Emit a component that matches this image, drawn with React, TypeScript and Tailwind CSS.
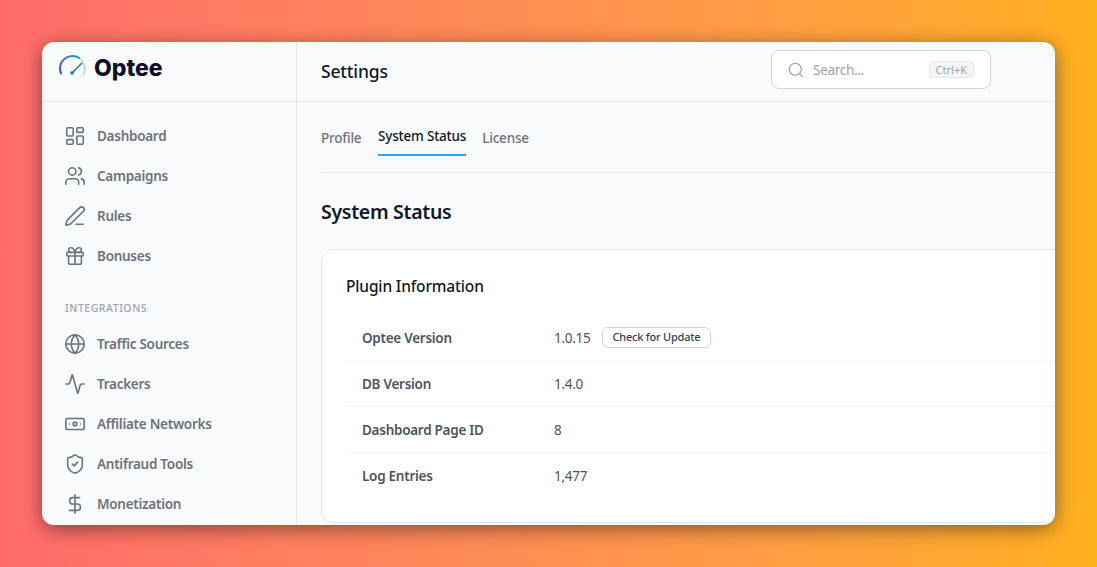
import { Activity, Banknote, DollarSign, Gift, Globe, LayoutDashboard, PenLine, Search, ShieldCheck, Users } from "lucide-react";

const mainNav = [
  { label: "Dashboard", icon: LayoutDashboard },
  { label: "Campaigns", icon: Users },
  { label: "Rules", icon: PenLine },
  { label: "Bonuses", icon: Gift },
];

const integrationNav = [
  { label: "Traffic Sources", icon: Globe },
  { label: "Trackers", icon: Activity },
  { label: "Affiliate Networks", icon: Banknote },
  { label: "Antifraud Tools", icon: ShieldCheck },
  { label: "Monetization", icon: DollarSign },
];

function NavItem({ label, icon: Icon }: { label: string; icon: typeof Globe }) {
  return (
    <div className="flex h-10 items-center gap-[11px] pl-[22px] text-[13.5px] font-semibold tracking-[-0.02em] text-[#6b7280]">
      <Icon size={22} strokeWidth={1.75} className="text-[#6b7280]" />
      <span>{label}</span>
    </div>
  );
}

function InfoRow({ label, value, last, children }: { label: string; value: string; last?: boolean; children?: React.ReactNode }) {
  return (
    <div className={`flex h-[46px] items-center pl-4 text-[13.5px] tracking-[-0.02em] ${last ? "" : "border-b border-[#f3f4f6] pt-px"}`}>
      <div className="w-[192px] font-semibold text-[#4b5563]">{label}</div>
      <div className="text-[#4b5563]">{value}</div>
      {children}
    </div>
  );
}

export default function App() {
  return (
    <div className="h-[567px] w-[1097px] overflow-hidden bg-gradient-to-r from-[#ff6b6b] to-[#ffb01c] px-[42px] py-[42px]" style={{ fontFamily: '"Noto Sans", sans-serif' }}>
      <div className="flex h-[483px] w-[1013px] overflow-hidden rounded-xl bg-[#f9fafb] shadow-[0_4px_20px_rgba(0,0,0,0.45)]">
        {/* Sidebar */}
        <aside className="w-[255px] shrink-0 border-r border-[#e5e7eb]">
          <div className="flex h-[60px] items-center gap-[8px] border-b border-[#e5e7eb] pb-[6px] pl-4">
            <svg width="28" height="24" viewBox="0 0 28 24" fill="none" className="-mt-[6px]">
              <defs>
                <linearGradient id="dial" x1="0" y1="1" x2="1" y2="0">
                  <stop offset="0" stopColor="#4f46e5" />
                  <stop offset="1" stopColor="#0ea5c6" />
                </linearGradient>
              </defs>
              <path d="M3 19.5 A12.5 12.5 0 0 1 21.3 4" stroke="url(#dial)" strokeWidth="2" strokeLinecap="round" />
              <path d="M23 5.5 A12.5 12.5 0 0 1 25.3 20.8" stroke="#d1d5db" strokeWidth="2" strokeLinecap="round" />
              <path d="M14 19 L23.7 9.3" stroke="#0e7fa8" strokeWidth="1.5" strokeLinecap="round" />
              <circle cx="14" cy="19" r="1.8" fill="#0e7fa8" />
            </svg>
            <span className="text-[23px] font-extrabold text-[#0f1028]" style={{ fontFamily: "Inter, sans-serif" }}>Optee</span>
          </div>
          <nav className="pt-[14px]">
            {mainNav.map((item) => (
              <NavItem key={item.label} {...item} />
            ))}
            <div className="mt-[25px] mb-[8px] pl-[23px] text-[10.5px] leading-[15px] font-medium tracking-[0.05em] text-[#9ca3af]">INTEGRATIONS</div>
            {integrationNav.map((item) => (
              <NavItem key={item.label} {...item} />
            ))}
          </nav>
        </aside>

        {/* Main */}
        <main className="w-[900px] shrink-0">
          <header className="flex h-[60px] items-center border-b border-[#e5e7eb] pl-6">
            <h1 className="w-[66px] shrink-0 text-[17.5px] font-medium tracking-[-0.01em] whitespace-nowrap text-[#111827]">Settings</h1>
            <div className="mb-[4px] ml-[384px] flex h-[39px] w-[220px] items-center rounded-lg border border-[#d1d5db] bg-white pr-4 pl-[15px]">
              <Search size={18} strokeWidth={1.5} className="text-[#9ca3af]" />
              <span className="mt-px ml-[8px] text-[13.5px] tracking-[-0.02em] text-[#9ca3af]">Search...</span>
              <span className="ml-auto rounded border border-[#e5e7eb] bg-[#f3f4f6] px-[6px] text-[11px] leading-[15px] text-[#9ca3af]">Ctrl+K</span>
            </div>
          </header>

          <div className="px-6">
            <div className="flex h-[71px] items-end gap-4 border-b border-[#e5e7eb] pb-4 text-[13.5px] font-medium tracking-[-0.015em]">
              <span className="w-[41px] pb-[8px] text-[#6b7280]">Profile</span>
              <span className="border-b-2 border-[#2ea3f2] pb-[8px] text-[#111827]">System Status</span>
              <span className="pb-[8px] text-[#6b7280]">License</span>
            </div>

            <h2 className="mt-[24px] text-[19.5px] font-semibold leading-[30px] tracking-[-0.015em] text-[#111827]">System Status</h2>

            <section className="mt-[22px] h-[274px] rounded-xl border border-[#e5e7eb] bg-white px-6 pt-[24px]">
              <h3 className="text-[15.5px] font-medium leading-6 tracking-[-0.01em] text-[#111827]">Plugin Information</h3>
              <div className="mt-[17px]">
                <InfoRow label="Optee Version" value="1.0.15">
                  <button className="-mt-px ml-[11px] flex h-[21px] items-center rounded-md border border-[#d1d5db] px-[10px] text-[11px] font-medium tracking-[-0.02em] text-[#374151]">Check for Update</button>
                </InfoRow>
                <InfoRow label="DB Version" value="1.4.0" />
                <InfoRow label="Dashboard Page ID" value="8" />
                <InfoRow label="Log Entries" value="1,477" last />
              </div>
            </section>
          </div>
        </main>
      </div>
    </div>
  );
}
